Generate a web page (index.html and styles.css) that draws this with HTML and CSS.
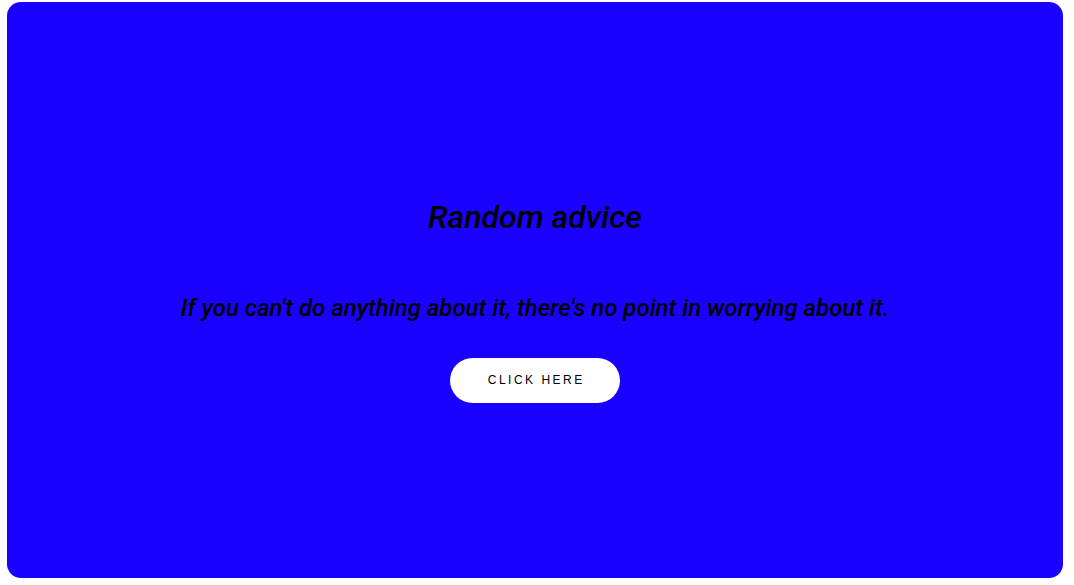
FILE: index.html
```html
<!DOCTYPE html>
<html>
<head>
<meta charset="utf-8">
<link rel="stylesheet" href="styles.css">
</head>
<body>
<main class="card">
  <h1 class="title">Random advice</h1>
  <p class="quote">If you can't do anything about it, there's no point in worrying about it.</p>
  <button class="btn">CLICK HERE</button>
</main>
</body>
</html>
```

FILE: styles.css
```css
html, body {
  margin: 0;
  height: 100%;
  background: #ffffff;
}
body {
  padding: 2px 11px 7px 7px;
  box-sizing: border-box;
  font-family: Roboto, "Liberation Sans", sans-serif;
}
.card {
  height: 100%;
  background: #1a00ff;
  border-radius: 14px;
  display: flex;
  flex-direction: column;
  align-items: center;
  justify-content: center;
  color: #000;
  padding-top: 20px;
  box-sizing: border-box;
}
.title {
  margin: 0;
  font-size: 32px;
  font-weight: 500;
  font-style: italic;
  line-height: 38px;
}
.quote {
  margin: 57px 0 0;
  font-size: 24px;
  font-weight: 500;
  font-style: italic;
  line-height: 30px;
}
.btn {
  margin-top: 35px;
  width: 170px;
  height: 45px;
  border: none;
  border-radius: 22.5px;
  background: #fff;
  color: #000;
  font-family: "Liberation Sans", Arial, sans-serif;
  font-size: 12px;
  letter-spacing: 2.5px;
  padding: 0 0 0 2.5px;
}
```
